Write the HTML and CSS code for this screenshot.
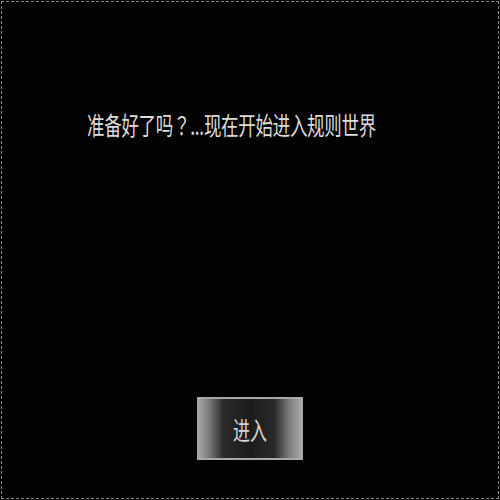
FILE: index.html
```html
<!DOCTYPE html>
<html lang="zh-CN">
<head>
<meta charset="utf-8">
<link rel="stylesheet" href="styles.css">
</head>
<body>
<div class="screen">
  <div class="title">准备好了吗<span class="qm" lang="ja">？</span>...现在开始进入规则世界</div>
  <button class="enter"><span class="label">进入</span></button>
</div>
</body>
</html>
```
FILE: styles.css
```css
html, body {
  margin: 0;
  padding: 0;
  background: #000;
}
.screen {
  box-sizing: border-box;
  width: 498px;
  height: 498px;
  margin: 1px;
  border: 1px dashed #8a8a8a;
  background: #020202;
  display: flex;
  flex-direction: column;
  font-family: "Noto Sans CJK SC", "Noto Sans", sans-serif;
}
.title {
  margin-top: 108px;
  padding-left: 85px;
  font-size: 17.5px;
  line-height: 30px;
  color: #dcdcdc;
  letter-spacing: -0.3px;
  transform: scaleY(1.45);
  transform-origin: left center;
}
.qm {
  font-family: "Noto Sans CJK JP", sans-serif;
}
.enter {
  margin: auto auto 38px;
  width: 106px;
  height: 63px;
  box-sizing: border-box;
  border: 2px solid #a8a8a8;
  background: linear-gradient(to right, #a4a4a4 0%, #7a7a7a 10%, #2a2a2a 24%, #1c1c1c 50%, #2a2a2a 74%, #7a7a7a 88%, #a8a8a8 100%);
  display: flex;
  align-items: center;
  justify-content: center;
  padding: 0;
  font-family: inherit;
}
.label {
  font-size: 17px;
  color: #d6d6d6;
  display: inline-block;
  transform: scaleY(1.5);
}
```
